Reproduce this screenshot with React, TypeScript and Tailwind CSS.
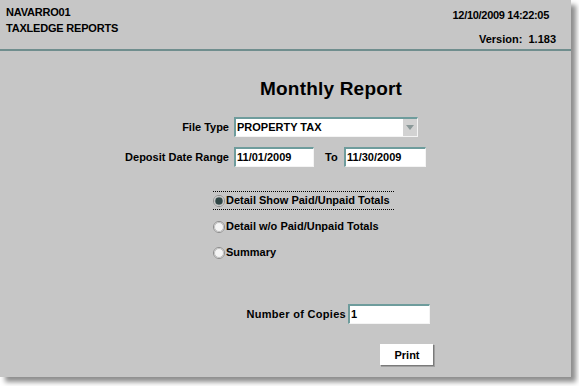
import React from "react";

const font = { fontFamily: '"Liberation Sans", Arial, sans-serif' };

function Radio({ checked }: { checked?: boolean }) {
  return (
    <svg width="12" height="12" viewBox="0 0 12 12" className="shrink-0">
      <circle cx="6" cy="6" r="5.5" fill="#ffffff" stroke="#8a8a8a" strokeWidth="1" />
      <circle cx="6" cy="6" r="4.5" fill="#f4f4f4" stroke="#b0b0b0" strokeWidth="0.8" />
      {checked && <circle cx="6" cy="6" r="3.8" fill="#2f4545" />}
    </svg>
  );
}

function Field({ value, w }: { value: string; w: string }) {
  return (
    <div
      className={`${w} h-[20px] bg-white border-t-2 border-l-2 border-t-[#6e9c9c] border-l-[#6e9c9c] border-r border-b border-r-[#f4f4f4] border-b-[#f4f4f4] flex items-center pl-[1px] text-[11px] font-bold text-black`}
    >
      {value}
    </div>
  );
}

export default function App() {
  return (
    <div className="w-[579px] h-[386px] bg-white" style={font}>
      <div className="w-[571px] h-[377px] bg-[#c6c6c6] shadow-[5px_5px_5px_rgba(0,0,0,0.45)] flex flex-col text-black">
        <div className="h-[49px] flex justify-between px-[6px] pt-[6px] font-bold text-[11px]">
          <div className="flex flex-col tracking-[-0.2px]">
            <div className="leading-[13px]">NAVARRO01</div>
            <div className="leading-[13px] mt-[3px]">TAXLEDGE REPORTS</div>
          </div>
          <div className="flex flex-col items-end pr-[8px] tracking-[-0.3px]">
            <div className="leading-[13px] pr-[8px] mt-[3px]">12/10/2009 14:22:05</div>
            <div className="leading-[13px] mt-[11px] pr-[1px] tracking-[0px]">Version:&nbsp;&nbsp;1.183</div>
          </div>
        </div>
        <div className="h-[2px] bg-[#708e8e]" />

        <div className="pl-[260px] mt-[27px] text-[19px] font-bold leading-[22px] tracking-[0.2px]">
          Monthly Report
        </div>

        <div className="flex items-center mt-[17px] text-[11px] font-bold">
          <div className="w-[229px] text-right">File Type</div>
          <div className="ml-[5px] w-[184px] h-[20px] bg-white border-t-2 border-l-2 border-t-[#6e9c9c] border-l-[#6e9c9c] border-r border-b border-r-[#f4f4f4] border-b-[#f4f4f4] flex items-center">
            <div className="flex-1 pl-[1px]">PROPERTY TAX</div>
            <div className="w-[14px] h-full bg-[#d2d2d2] flex items-center justify-center">
              <svg width="8" height="5" viewBox="0 0 8 5">
                <path d="M0 0 L8 0 L4 5 Z" fill="#8a9898" />
              </svg>
            </div>
          </div>
        </div>

        <div className="flex items-center mt-[10px] text-[11px] font-bold">
          <div className="w-[229px] text-right">Deposit Date Range</div>
          <div className="ml-[5px]">
            <Field value="11/01/2009" w="w-[80px]" />
          </div>
          <div className="ml-[11px] w-[19px]">To</div>
          <Field value="11/30/2009" w="w-[82px]" />
        </div>

        <div className="ml-[213px] mt-[24px] w-[181px] text-[11px] font-bold">
          <div className="flex items-center gap-[1px] h-[19px] border-y border-dotted border-black">
            <Radio checked />
            <span>Detail Show Paid/Unpaid Totals</span>
          </div>
          <div className="flex items-center gap-[1px] h-[19px] mt-[7px]">
            <Radio />
            <span>Detail w/o Paid/Unpaid Totals</span>
          </div>
          <div className="flex items-center gap-[1px] h-[19px] mt-[7px]">
            <Radio />
            <span>Summary</span>
          </div>
        </div>

        <div className="flex items-center mt-[42px] text-[11px] font-bold">
          <div className="w-[346px] text-right tracking-[0.3px]">Number of Copies</div>
          <div className="ml-[2px]">
            <Field value="1" w="w-[82px]" />
          </div>
        </div>

        <div className="flex mt-[20px]">
          <button className="ml-[380px] w-[54px] h-[22px] bg-white border-r border-b border-r-[#7a7a7a] border-b-[#7a7a7a] border-t border-l border-t-[#ffffff] border-l-[#ffffff] shadow-[1px_1px_0_#a0a0a0] text-[11px] font-bold flex items-center justify-center" style={font}>
            Print
          </button>
        </div>
      </div>
    </div>
  );
}
